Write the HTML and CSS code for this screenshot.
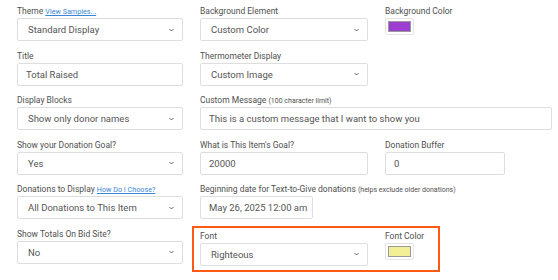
FILE: index.html
```html
<!DOCTYPE html>
<html>

  <head>
    <meta charset="UTF-8">
    <title>Thermometer Settings</title>
    <link rel="stylesheet" href="styles.css">
  </head>

  <body>
    <div class="form">
      <!-- row 1 -->
      <div class="field">
	<label>Theme <a href="#" class="helpLink">View Samples...</a></label>
	<div class="control select"><span>Standard Display</span><svg class="chev" width="5" height="4" viewBox="0 0 5 4"><polyline points="0.5,1 2.5,3 4.5,1"/></svg></div>
      </div>
      <div class="field">
	<label>Background Element</label>
	<div class="control select"><span>Custom Color</span><svg class="chev" width="5" height="4" viewBox="0 0 5 4"><polyline points="0.5,1 2.5,3 4.5,1"/></svg></div>
      </div>
      <div class="field">
	<label>Background Color</label>
	<div class="swatch"><span class="swatchColor purple"></span></div>
      </div>

      <!-- row 2 -->
      <div class="field">
	<label>Title</label>
	<div class="control input">Total Raised</div>
      </div>
      <div class="field">
	<label>Thermometer Display</label>
	<div class="control select"><span>Custom Image</span><svg class="chev" width="5" height="4" viewBox="0 0 5 4"><polyline points="0.5,1 2.5,3 4.5,1"/></svg></div>
      </div>
      <div class="spacer"></div>

      <!-- row 3 -->
      <div class="field">
	<label>Display Blocks</label>
	<div class="control select"><span>Show only donor names</span><svg class="chev" width="5" height="4" viewBox="0 0 5 4"><polyline points="0.5,1 2.5,3 4.5,1"/></svg></div>
      </div>
      <div class="field wide">
	<label>Custom Message <small>(100 character limit)</small></label>
	<div class="control input">This is a custom message that I want to show you</div>
      </div>

      <!-- row 4 -->
      <div class="field">
	<label>Show your Donation Goal?</label>
	<div class="control select"><span>Yes</span><svg class="chev" width="5" height="4" viewBox="0 0 5 4"><polyline points="0.5,1 2.5,3 4.5,1"/></svg></div>
      </div>
      <div class="field">
	<label>What is This Item's Goal?</label>
	<div class="control input">20000</div>
      </div>
      <div class="field">
	<label>Donation Buffer</label>
	<div class="control input buffer">0</div>
      </div>

      <!-- row 5 -->
      <div class="field">
	<label>Donations to Display <a href="#" class="helpLink">How Do I Choose?</a></label>
	<div class="control select"><span>All Donations to This Item</span><svg class="chev" width="5" height="4" viewBox="0 0 5 4"><polyline points="0.5,1 2.5,3 4.5,1"/></svg></div>
      </div>
      <div class="field">
	<label>Beginning date for Text-to-Give donations <small>(helps exclude older donations)</small></label>
	<div class="control input date">May 26, 2025 12:00 am</div>
      </div>
      <div class="spacer"></div>

      <!-- row 6 -->
      <div class="field">
	<label>Show Totals On Bid Site?</label>
	<div class="control select"><span>No</span><svg class="chev" width="5" height="4" viewBox="0 0 5 4"><polyline points="0.5,1 2.5,3 4.5,1"/></svg></div>
      </div>
      <div class="highlight">
	<div class="field fontField">
	  <label>Font</label>
	  <div class="control select"><span>Righteous</span><svg class="chev" width="5" height="4" viewBox="0 0 5 4"><polyline points="0.5,1 2.5,3 4.5,1"/></svg></div>
	</div>
	<div class="field">
	  <label>Font Color</label>
	  <div class="swatch"><span class="swatchColor yellow"></span></div>
	</div>
      </div>
    </div>
  </body>

</html>
```

FILE: styles.css
```css
      body {
	  margin: 0;
	  background-color: #fff;
	  font-family: Roboto, "Liberation Sans", sans-serif;
	  color: #505050;
      }
      .form {
	  display: grid;
	  grid-template-columns: 166px 168px 167px;
	  column-gap: 17px;
	  padding: 4px 6px 0 17px;
      }
      .field {
	  margin-bottom: 7.6px;
	  min-width: 0;
      }
      .field label {
	  display: block;
	  height: 14px;
	  line-height: 14px;
	  font-size: 8.5px;
	  color: #505050;
	  white-space: nowrap;
      }
      .field label small {
	  font-size: 7px;
      }
      .helpLink {
	  font-size: 7.2px;
	  color: #3a86d4;
	  text-decoration: underline;
      }
      .wide {
	  grid-column: 2 / 4;
      }
      .control {
	  box-sizing: border-box;
	  height: 23px;
	  border: 1px solid #dedede;
	  border-radius: 2px;
	  background-color: #fff;
	  font-size: 9.5px;
	  color: #555;
	  display: flex;
	  align-items: center;
      }
      .input {
	  padding-left: 8px;
      }
      .select {
	  padding: 0 8px 0 10px;
	  justify-content: space-between;
      }
      .chev polyline {
	  fill: none;
	  stroke: #666;
	  stroke-width: 1;
      }
      .buffer {
	  width: 120px;
      }
      .date {
	  width: 113px;
      }
      .swatch {
	  box-sizing: border-box;
	  width: 29px;
	  height: 17px;
	  border: 1px solid #e4e4e4;
	  border-radius: 2px;
	  display: flex;
	  align-items: center;
	  justify-content: center;
      }
      .swatchColor {
	  display: block;
	  box-sizing: border-box;
	  width: 23px;
	  height: 11px;
	  border: 1px solid #9a9a9a;
      }
      .purple {
	  background-color: #9c3fd0;
      }
      .yellow {
	  background-color: #f2ef96;
      }
      .highlight {
	  grid-column: 2 / 4;
	  justify-self: start;
	  display: flex;
	  column-gap: 17px;
	  margin: -1px 0 0 -8px;
	  padding: 1px 14px 4px 6px;
	  border: 2px solid #ff5a14;
      }
      .highlight .field {
	  margin-bottom: 0;
      }
      .fontField {
	  width: 168px;
      }
```
